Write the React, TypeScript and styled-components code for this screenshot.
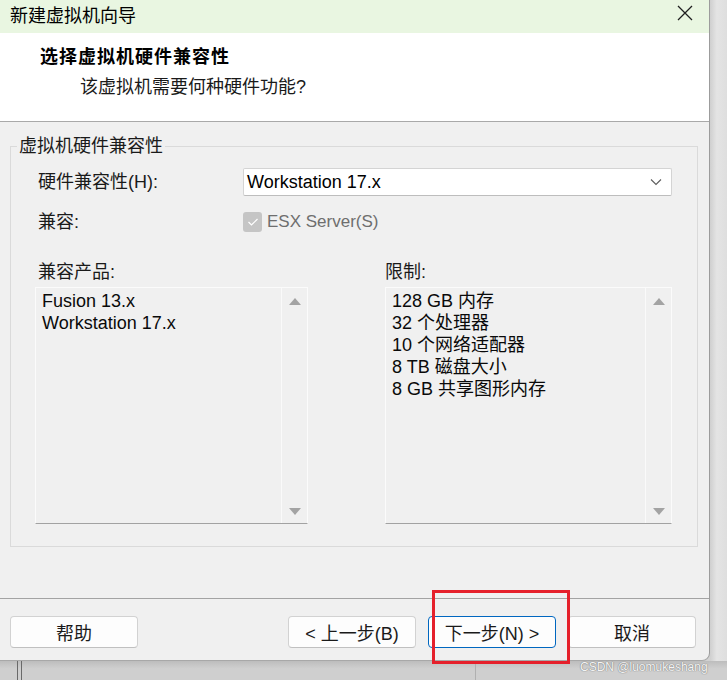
import React from "react";
import styled, { createGlobalStyle } from "styled-components";

const GlobalStyle = createGlobalStyle`
  html, body {
    margin: 0;
    padding: 0;
    background: #d6d6d6;
  }
  body {
    font-family: "Liberation Sans", "Noto Sans CJK SC", sans-serif;
    font-size: 18px;
    color: #000;
  }
`;

const compatProducts = ["Fusion 13.x", "Workstation 17.x"];
const limits = [
  "128 GB 内存",
  "32 个处理器",
  "10 个网络适配器",
  "8 TB 磁盘大小",
  "8 GB 共享图形内存",
];

export default function App() {
  return (
    <Screen>
      <GlobalStyle />
      <TopArea>
        <Dialog>
          <TitleBar>
            <TitleText>新建虚拟机向导</TitleText>
            <CloseButton aria-label="close">
              <svg width="16" height="16" viewBox="0 0 16 16">
                <path d="M1 1 L15 15 M15 1 L1 15" stroke="#1f1f1f" strokeWidth="1.3" fill="none" />
              </svg>
            </CloseButton>
          </TitleBar>

          <Header>
            <HeaderTitle>选择虚拟机硬件兼容性</HeaderTitle>
            <HeaderSub>该虚拟机需要何种硬件功能?</HeaderSub>
          </Header>

          <Body>
            <GroupBox>
              <Legend>虚拟机硬件兼容性</Legend>
              <FormGrid>
                <Label>硬件兼容性(H):</Label>
                <Select>
                  <span>Workstation 17.x</span>
                  <svg width="12" height="8" viewBox="0 0 12 8">
                    <path d="M1 1.5 L6 6.5 L11 1.5" stroke="#5c5c5c" strokeWidth="1.1" fill="none" />
                  </svg>
                </Select>
                <Label>兼容:</Label>
                <CheckRow>
                  <CheckBox>
                    <svg width="12" height="10" viewBox="0 0 12 10">
                      <path d="M1.5 5 L4.5 8 L10.5 2" stroke="#fff" strokeWidth="1.2" fill="none" />
                    </svg>
                  </CheckBox>
                  <DisabledText>ESX Server(S)</DisabledText>
                </CheckRow>
              </FormGrid>

              <ListsRow>
                <ListColumn>
                  <Label>兼容产品:</Label>
                  <ListBox>
                    <ListItems>
                      {compatProducts.map((p) => (
                        <Item key={p}>{p}</Item>
                      ))}
                    </ListItems>
                    <ScrollBar>
                      <Arrow $dir="up" />
                      <Arrow $dir="down" />
                    </ScrollBar>
                  </ListBox>
                </ListColumn>
                <ListColumn>
                  <Label $flush>限制:</Label>
                  <ListBox>
                    <ListItems>
                      {limits.map((l) => (
                        <Item key={l}>{l}</Item>
                      ))}
                    </ListItems>
                    <ScrollBar>
                      <Arrow $dir="up" />
                      <Arrow $dir="down" />
                    </ScrollBar>
                  </ListBox>
                </ListColumn>
              </ListsRow>
            </GroupBox>
          </Body>

          <Footer>
            <Button>帮助</Button>
            <NavButtons>
              <Button>&lt; 上一步(B)</Button>
              <Button $primary>下一步(N) &gt;</Button>
              <Button>取消</Button>
            </NavButtons>
          </Footer>
        </Dialog>
        <SideShadow />
      </TopArea>

      <BackWindow>
        <BackEdge />
        <BackPane />
        <BackPane $wide />
      </BackWindow>

      <Highlight />
      <Watermark>CSDN @luomukeshang</Watermark>
    </Screen>
  );
}

const Screen = styled.div`
  position: relative;
  width: 727px;
  height: 680px;
  overflow: hidden;
  background: #d2d2d2;
`;

const TopArea = styled.div`
  display: flex;
  height: 661px;
`;

const Dialog = styled.div`
  width: 709px;
  height: 660px;
  display: flex;
  flex-direction: column;
  background: #f0f0f0;
  border-right: 1px solid #9c9c9c;
  border-bottom: 1px solid #a8a8a8;
  border-bottom-right-radius: 8px;
  overflow: hidden;
`;

const SideShadow = styled.div`
  flex: 1;
  background: linear-gradient(to right, #cfcfcf, #e4e4e4 40%, #dedede);
`;

const TitleBar = styled.div`
  height: 33px;
  display: flex;
  align-items: center;
  justify-content: space-between;
  padding: 0 16px 0 10px;
  background: #e9f6e1;
`;

const TitleText = styled.span`
  font-size: 18px;
  position: relative;
  top: -3px;
`;

const CloseButton = styled.div`
  display: flex;
  position: relative;
  top: -4px;
`;

const Header = styled.div`
  height: 89px;
  background: #ffffff;
  border-bottom: 1px solid #a9a9a9;
  padding: 13px 0 0 40px;
  box-sizing: border-box;
`;

const HeaderTitle = styled.div`
  font-size: 18px;
  font-weight: 700;
  line-height: 22px;
  letter-spacing: 1px;
`;

const HeaderSub = styled.div`
  margin: 8px 0 0 40px;
  font-size: 18px;
  line-height: 22px;
  color: #1a1a1a;
`;

const Body = styled.div`
  flex: 1;
  padding-top: 15px;
`;

const GroupBox = styled.fieldset`
  margin: 0 11px 0 10px;
  padding: 13px 25px 22px 24px;
  border: 1px solid #dadada;
  min-width: 0;
`;

const Legend = styled.legend`
  margin-left: -18px;
  padding: 0 2px;
  font-size: 18px;
  line-height: 18px;
  color: #1a1a1a;
`;

const FormGrid = styled.div`
  display: grid;
  grid-template-columns: 208px 1fr;
  grid-auto-rows: 28px;
  row-gap: 12px;
  align-items: center;
`;

const Label = styled.div<{ $flush?: boolean }>`
  padding-left: ${(p) => (p.$flush ? "0" : "3px")};
  font-size: 18px;
  line-height: 20px;
  color: #1a1a1a;
`;

const Select = styled.div`
  height: 28px;
  box-sizing: border-box;
  display: flex;
  align-items: center;
  justify-content: space-between;
  padding: 0 9px 0 3px;
  background: #ffffff;
  border: 1px solid #d4d4d4;
  border-bottom-color: #bdbdbd;
  border-radius: 2px;
  font-size: 18px;
`;

const CheckRow = styled.div`
  display: flex;
  align-items: center;
  gap: 5px;
`;

const CheckBox = styled.div`
  width: 19px;
  height: 20px;
  border-radius: 3px;
  background: #c5c5c5;
  display: flex;
  align-items: center;
  justify-content: center;
`;

const DisabledText = styled.span`
  font-size: 17px;
  color: #6e6e6e;
`;

const ListsRow = styled.div`
  display: grid;
  grid-template-columns: 273px 1fr;
  column-gap: 77px;
  margin-top: 26px;
`;

const ListColumn = styled.div`
  display: flex;
  flex-direction: column;
  gap: 5px;
`;

const ListBox = styled.div`
  height: 237px;
  box-sizing: border-box;
  display: flex;
  background: #f0f0f0;
  border: 1px solid #fbfbfb;
  border-bottom-color: #a2a2a2;
`;

const ListItems = styled.div`
  flex: 1;
  padding: 2px 0 0 6px;
`;

const Item = styled.div`
  font-size: 18px;
  line-height: 22px;
  color: #0a0a0a;
`;

const ScrollBar = styled.div`
  width: 25px;
  display: flex;
  flex-direction: column;
  justify-content: space-between;
  align-items: center;
  padding: 10px 0 8px;
  border-left: 1px solid #fafafa;
`;

const Arrow = styled.div<{ $dir: "up" | "down" }>`
  width: 0;
  height: 0;
  border-left: 6px solid transparent;
  border-right: 6px solid transparent;
  ${(p) =>
    p.$dir === "up"
      ? "border-bottom: 7px solid #a3a3a3;"
      : "border-top: 7px solid #a3a3a3;"}
`;

const Footer = styled.div`
  height: 62px;
  box-sizing: border-box;
  border-top: 1px solid #a3a3a3;
  display: flex;
  align-items: flex-start;
  justify-content: space-between;
  padding: 17px 13px 0 10px;
`;

const NavButtons = styled.div`
  display: flex;
  gap: 12px;
`;

const Button = styled.button<{ $primary?: boolean }>`
  width: 128px;
  height: 32px;
  box-sizing: border-box;
  background: #fdfdfd;
  border: 1px solid ${(p) => (p.$primary ? "#0067c0" : "#d2d2d2")};
  border-bottom-color: ${(p) => (p.$primary ? "#0067c0" : "#c0c0c0")};
  border-radius: 4px;
  font-family: "Liberation Sans", "Noto Sans CJK SC", sans-serif;
  font-size: 18px;
  color: #1a1a1a;
  padding: 0;
`;

const BackWindow = styled.div`
  height: 19px;
  display: flex;
  background: linear-gradient(to bottom, #bdbdbd, #cfcfcf 40%);
`;

const BackEdge = styled.div`
  width: 3px;
  margin-left: 17px;
  border-left: 1px solid #6a6a6a;
  border-right: 1px solid #6a6a6a;
`;

const BackPane = styled.div<{ $wide?: boolean }>`
  width: ${(p) => (p.$wide ? "auto" : "453px")};
  flex: ${(p) => (p.$wide ? 1 : "none")};
  border-right: ${(p) => (p.$wide ? "none" : "1px solid #b0b0b0")};
`;

const Highlight = styled.div`
  position: absolute;
  left: 432px;
  top: 590px;
  width: 138px;
  height: 74px;
  box-sizing: border-box;
  border: 3px solid #e5202b;
  pointer-events: none;
`;

const Watermark = styled.div`
  position: absolute;
  left: 580px;
  top: 660px;
  font-family: "Liberation Sans", sans-serif;
  font-size: 12px;
  color: #f4f4f4;
  text-shadow: 0 0 1px #7a7a7a, 0 0 1px #7a7a7a;
  white-space: nowrap;
`;
